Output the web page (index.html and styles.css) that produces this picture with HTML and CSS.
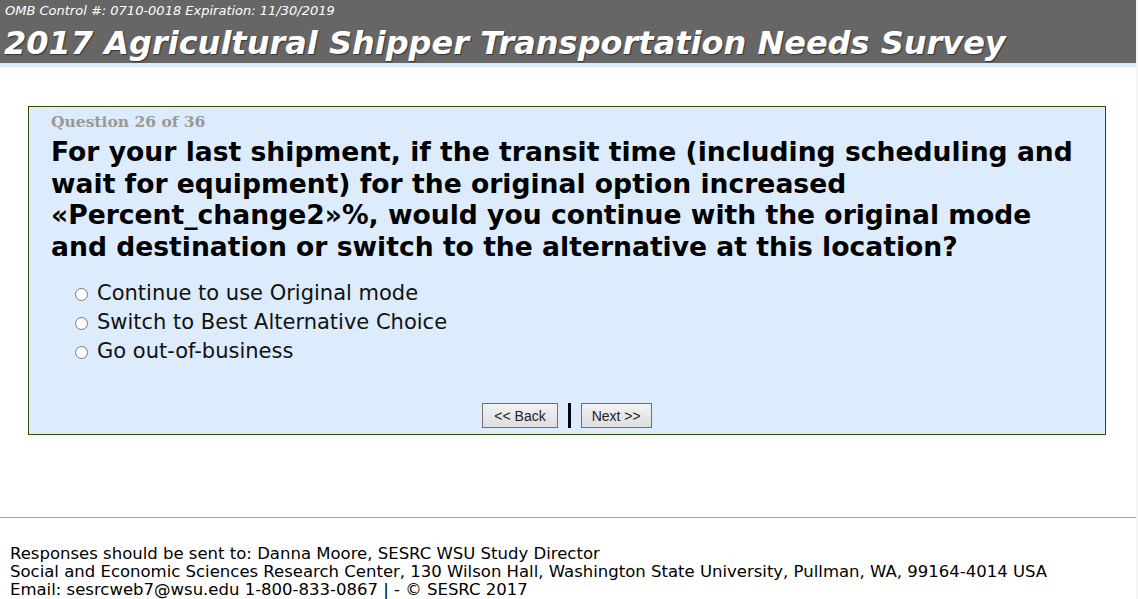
FILE: index.html
```html
<!DOCTYPE html>
<html>
    <head>
        <title> Agricultural Shipper Survey </title>
        <link rel="stylesheet" href="styles.css">
    </head>

    <body class="body">

        <!-- Header -->
        <div class="header">
            <div class="omb"> OMB Control #: 0710-0018 Expiration: 11/30/2019 </div>
            <h1 class="title"> 2017 Agricultural Shipper Transportation Needs Survey </h1>
        </div>

        <!-- Question -->
        <div class="questionBox">
            <div class="questionNum"> Question 26 of 36 </div>
            <div class="questionText">
                For your last shipment, if the transit time (including scheduling and wait for equipment) for the original option increased &laquo;Percent_change2&raquo;%, would you continue with the original mode and destination or switch to the alternative at this location?
            </div>

            <form class="answers">
                <label class="answer"><input type="radio" name="q26" class="radio"> Continue to use Original mode </label>
                <label class="answer"><input type="radio" name="q26" class="radio"> Switch to Best Alternative Choice </label>
                <label class="answer"><input type="radio" name="q26" class="radio"> Go out-of-business </label>
            </form>

            <div class="navButtons">
                <button class="navButton backButton"> &lt;&lt; Back </button>
                <span class="navSep"></span>
                <button class="navButton"> Next &gt;&gt; </button>
            </div>
        </div>

        <!-- Footer -->
        <div class="footer">
            Responses should be sent to: Danna Moore, SESRC WSU Study Director<br>
            Social and Economic Sciences Research Center, 130 Wilson Hall, Washington State University, Pullman, WA, 99164-4014 USA<br>
            Email: sesrcweb7@wsu.edu 1-800-833-0867 | - &copy; SESRC 2017
        </div>

    </body>
</html>
```

FILE: styles.css
```css
 html{
     background: #f4f4f4;
 }

 body{
     margin: 0;
     margin-right: 2px;
     min-height: 599px;
     background: white;
     font-family: "DejaVu Sans", Verdana, sans-serif;
 }

 /* Header */

 .header{
     background-color: #666666;
     border-bottom: 4px solid #dcebfb;
     height: 63px;
     overflow: hidden;
 }

 .omb{
     color: white;
     font-style: italic;
     font-size: 13px;
     padding: 3px 0 0 5px;
     height: 16px;
 }

 .title{
     color: white;
     font-style: italic;
     font-weight: bold;
     font-size: 32px;
     margin: 0;
     padding-left: 4px;
     line-height: 48px;
     text-shadow: 1px 1px 1px #333;
 }

 /* Question */

 .questionBox{
     background: #ddecfc;
     border: 1px solid #344f00;
     margin: 39px 30px 0 28px;
     padding: 5px 22px 6px 22px;
 }

 .questionNum{
     color: #999999;
     font-family: "DejaVu Serif", "Liberation Serif", serif;
     font-weight: bold;
     font-size: 15.5px;
     line-height: 20px;
 }

 .questionText{
     color: black;
     font-weight: bold;
     font-size: 26.6px;
     line-height: 31.5px;
     margin-top: 4px;
 }

 .answers{
     margin: 17px 0 0 21px;
 }

 .answer{
     display: flex;
     align-items: center;
     font-size: 21px;
     line-height: 29px;
     color: #111;
 }

 .radio{
     width: 13px;
     height: 13px;
     margin: 2px 9px 0 3px;
 }

 .navButtons{
     display: flex;
     justify-content: center;
     align-items: center;
     gap: 10px;
     margin-top: 37px;
 }

 .navButton{
     font-family: "Liberation Sans", Arial, sans-serif;
     font-size: 14px;
     color: #222;
     background: linear-gradient(#f2f2f2, #dedede);
     border: 1px solid #707070;
     height: 25px;
     padding: 0 10px;
 }

 .backButton{
     padding: 0 11px;
 }

 .navSep{
     width: 3px;
     height: 25px;
     background: black;
 }

 /* Footer */

 .footer{
     border-top: 1px solid #a0a0a0;
     margin-top: 82px;
     padding: 27px 0 0 10px;
     font-size: 16.5px;
     line-height: 18px;
     color: black;
 }
```
